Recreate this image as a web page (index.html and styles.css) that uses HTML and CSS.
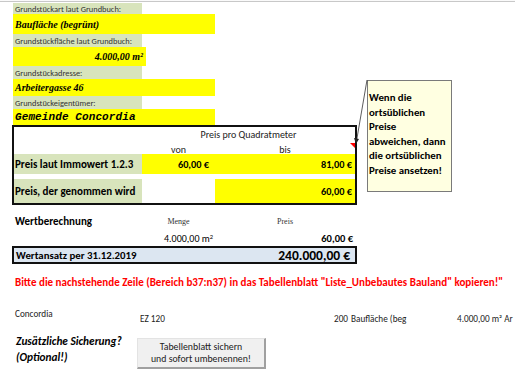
FILE: index.html
```html
<!DOCTYPE html>
<html lang="de">
<head>
<meta charset="utf-8">
<title>Grundstück Bewertung</title>
<link rel="stylesheet" href="styles.css">
</head>
<body>
<div class="topline"></div>
<div class="sheet">
  <section class="info">
    <div class="lbl r1">Grundstückart laut Grundbuch:</div>
    <div class="val wide r2 serif">Baufläche (begrünt)</div>
    <div class="lbl r3">Grundstückfläche laut Grundbuch:</div>
    <div class="val mid r4 serif right">4.000,00 m²</div>
    <div class="lbl r5">Grundstückadresse:</div>
    <div class="val wide r6 serif">Arbeitergasse 46</div>
    <div class="lbl r7">Grundstückeigentümer:</div>
    <div class="val wide r8 mono">Gemeinde Concordia</div>
  </section>

  <section class="pricebox">
    <div class="ph1"></div>
    <div class="ph1 span2">Preis pro Quadratmeter</div>
    <div class="ph2"></div>
    <div class="ph2 c">von</div>
    <div class="ph2 c">bis</div>
    <div class="prow green b lab">Preis laut Immowert 1.2.3</div>
    <div class="prow yel b right pc">60,00 €</div>
    <div class="prow yel b right pd">81,00 €</div>
    <div class="gap span3"></div>
    <div class="prow2 green b lab">Preis, der genommen wird</div>
    <div class="prow2"></div>
    <div class="prow2 yel b right pd">60,00 €</div>
  </section>

  <section class="calc">
    <div class="wb b">Wertberechnung</div>
    <div class="hd c">Menge</div>
    <div class="hd c">Preis</div>
    <div></div>
    <div class="qty right">4.000,00 m<sup>2</sup></div>
    <div class="qty right b pd">60,00 €</div>
  </section>

  <section class="total">
    <span class="b">Wertansatz per 31.12.2019</span>
    <span class="b big">240.000,00 €</span>
  </section>

  <p class="warn">Bitte die nachstehende Zeile (Bereich b37:n37) in das Tabellenblatt "Liste_Unbebautes Bauland" kopieren!"</p>

  <section class="datarow">
    <span class="d1">Concordia</span>
    <span class="d2">EZ 120</span>
    <span class="d3">200</span>
    <span class="d4">Baufläche (beg</span>
    <span class="d5">4.000,00 m² Ar</span>
  </section>

  <section class="extra">
    <div class="opt">Zusätzliche Sicherung?<br>(Optional!)</div>
    <button class="btn">Tabellenblatt sichern<br>und sofort umbenennen!</button>
  </section>

  <div class="comment">Wenn die ortsüblichen Preise abweichen, dann die ortsüblichen Preise ansetzen!</div>
  <svg class="connector" width="20" height="70" viewBox="0 0 20 70">
    <line x1="14" y1="0" x2="3.5" y2="61" stroke="#333" stroke-width="0.8"/>
    <path d="M1 58 L3 64 L6 59 Z" fill="#222"/>
  </svg>
  <div class="redmark"></div>
</div>
</body>
</html>
```

FILE: styles.css
```css
* { box-sizing: border-box; }
html, body { margin: 0; padding: 0; background: #fff; }
body {
  font-family: "Carlito", "Lato", "Liberation Sans", sans-serif;
  color: #000;
  width: 515px;
  height: 378px;
  overflow: hidden;
  position: relative;
}
.topline { height: 2px; border-bottom: 1px solid #c8c8c8; background: #fafafa; }
.sheet { padding-left: 13px; }
.b { font-weight: bold; }
.right { text-align: right; }
.c { text-align: center; }

/* info block */
.info { display: flex; flex-direction: column; margin-top: 1px; }
.lbl {
  width: 129px; background: #d8e4bc; font-size: 8.4px; color: #333;
  padding-left: 2px; display: flex; align-items: center;
}
.val { background: #ffff00; display: flex; align-items: center; padding: 0 3px 0 2px; }
.val.right { justify-content: flex-end; }
.wide { width: 202px; }
.mid { width: 133px; }
.r1 { height: 11px; }
.r2 { height: 20px; }
.r3 { height: 13px; }
.r4 { height: 19px; }
.r5 { height: 13px; }
.r6 { height: 17px; }
.r7 { height: 13px; }
.r8 { height: 16px; }
.serif { font-family: "Liberation Serif", "DejaVu Serif", serif; font-weight: bold; font-style: italic; font-size: 10px; }
.mono { font-family: "Liberation Mono", "DejaVu Sans Mono", monospace; font-weight: bold; font-style: italic; font-size: 11px; letter-spacing: 0.1px; }

/* price box */
.pricebox {
  margin-left: -1px;
  width: 345px;
  border: 2px solid #111;
  display: grid;
  grid-template-columns: 128px 73px 140px;
  grid-template-rows: 15px 12px 20px 5px 24px;
  font-size: 10.3px;
}
.span2 { grid-column: span 2; }
.span3 { grid-column: span 3; }
.ph1, .ph2 { font-size: 10px; color: #222; display: flex; align-items: center; justify-content: center; }
.ph2 { padding-top: 3px; }
.green { background: #d8e4bc; }
.yel { background: #ffff00; }
.prow, .prow2 { display: flex; align-items: center; padding-left: 1px; }
.lab { font-size: 11px; }
.prow.right, .prow2.right { justify-content: flex-end; }
.pc { padding-right: 6px; }
.pd { padding-right: 3px; }

/* calc */
.calc {
  margin-left: 1px;
  width: 341px;
  display: grid;
  grid-template-columns: 128px 73px 140px;
  grid-template-rows: 19px 14px;
  margin-top: 7px;
}
.wb { font-size: 11px; display: flex; align-items: center; padding-left: 1px; }
.hd { font-family: "Liberation Serif", serif; font-size: 8px; color: #333; display: flex; align-items: center; justify-content: center; }
.qty { font-size: 10px; display: flex; align-items: center; justify-content: flex-end; padding-right: 2px; }
.qty.pd { padding-right: 2px; font-size: 10.5px; }
.qty sup { font-size: 6.5px; line-height: 0; position: relative; top: -1px; vertical-align: super; }

.total {
  margin-left: -1px;
  margin-top: 1px;
  width: 345px; height: 18px;
  background: #dce6f1;
  border: 2px solid #111;
  display: flex; align-items: center; justify-content: space-between;
  padding: 0 5px 0 2px;
  font-size: 10.8px;
}
.big { font-size: 13.5px; }

.warn {
  margin: 11px 0 0 2px;
  color: #ff0000;
  font-weight: bold;
  font-size: 11px;
  height: 16px;
  line-height: 16px;
  white-space: nowrap;
}

.datarow { position: relative; height: 34px; margin-top: 15px; font-size: 9.2px; color: #222; }
.datarow span { position: absolute; white-space: nowrap; }
.d1 { left: 2px; top: 2px; }
.d2 { left: 127px; top: 7px; }
.d3 { left: 321px; top: 7px; }
.d4 { left: 338px; top: 7px; }
.d5 { left: 444px; top: 7px; }

.extra { display: flex; align-items: flex-start; }
.opt { width: 124px; padding-left: 3px; font-weight: bold; font-style: italic; font-size: 11.3px; line-height: 16px; margin-top: -7px; }
.btn {
  width: 129px; height: 31px; margin-top: -2px;
  background: #f0f0f0;
  border: 1px solid #e3e3e3;
  border-right: 2px solid #a0a0a0;
  border-bottom: 2px solid #a0a0a0;
  font-family: inherit; font-size: 9.8px; color: #222;
  line-height: 12px; padding: 0;
}

.comment {
  position: absolute; left: 367px; top: 80px;
  width: 85px; height: 112px;
  background: #ffffe1;
  border: 1px solid #7a7a7a;
  font-weight: bold; font-size: 10.8px; line-height: 14.6px;
  padding: 10px 1px 0 1px;
}
.connector { position: absolute; left: 353px; top: 80px; }
.redmark {
  position: absolute; left: 350px; top: 143px;
  width: 0; height: 0;
  border-left: 5px solid transparent;
  border-top: 5px solid #ff0000;
}
```
